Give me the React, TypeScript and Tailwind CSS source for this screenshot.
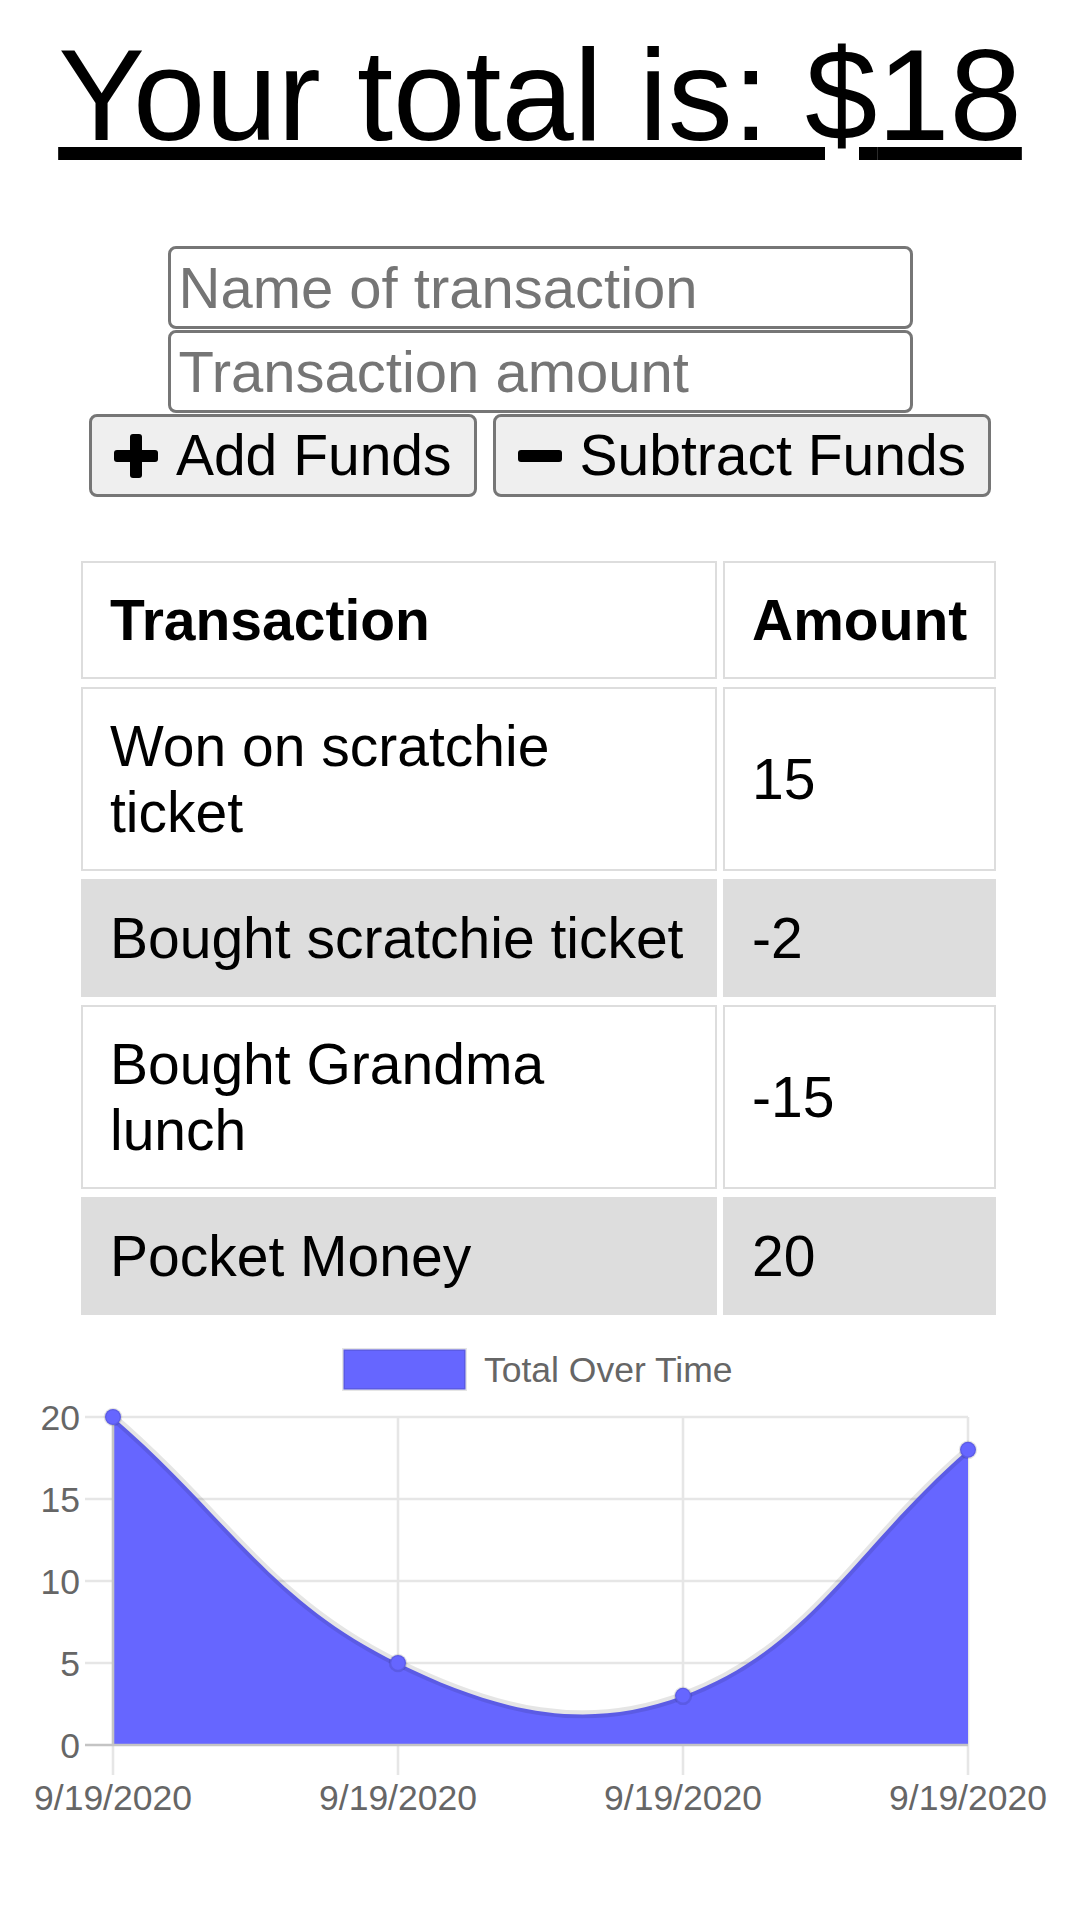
import { useState } from 'react'

type Tx = { name: string; amount: number }

const transactions: Tx[] = [
  { name: 'Won on scratchie ticket', amount: 15 },
  { name: 'Bought scratchie ticket', amount: -2 },
  { name: 'Bought Grandma lunch', amount: -15 },
  { name: 'Pocket Money', amount: 20 },
]

function PlusIcon() {
  return (
    <svg width="44" height="44" viewBox="0 0 44 44" className="shrink-0">
      <rect x="16" y="0" width="12" height="44" rx="3" fill="black" />
      <rect x="0" y="16" width="44" height="12" rx="3" fill="black" />
    </svg>
  )
}

function MinusIcon() {
  return (
    <svg width="44" height="44" viewBox="0 0 44 44" className="shrink-0">
      <rect x="0" y="16" width="44" height="12" rx="3" fill="black" />
    </svg>
  )
}

const xs = [113, 398, 683, 968]
const yTicks = [
  { v: 20, y: 1419 },
  { v: 15, y: 1501 },
  { v: 10, y: 1583 },
  { v: 5, y: 1665 },
  { v: 0, y: 1747 },
]
const points = [
  [113, 1419],
  [398, 1665],
  [683, 1697.8],
  [968, 1451.8],
]
const curve =
  'M113 1419 C227 1517.4, 268.6 1601.7, 398 1665 C496.6 1713.2, 584.4 1734.7, 683 1697.8 C812.4 1649.4, 854 1550.2, 968 1451.8'

function Chart() {
  const font = { fontFamily: 'Liberation Sans, Arial, sans-serif' }
  return (
    <svg width="1080" height="520" viewBox="0 1325 1080 520" className="block" style={font}>
      <rect x="343.5" y="1351.5" width="122" height="40" fill="#6666ff" stroke="rgba(0,0,0,0.1)" strokeWidth="3" />
      <text x="484" y="1384" fontSize="35.5" fill="#666666">Total Over Time</text>

      {yTicks.slice(0, 4).map((t) => (
        <line key={t.v} x1="85" x2="968" y1={t.y} y2={t.y} stroke="#e6e6e6" strokeWidth="2.6" />
      ))}
      {xs.slice(1).map((x) => (
        <line key={x} x1={x} x2={x} y1="1419" y2="1777" stroke="#e6e6e6" strokeWidth="2.6" />
      ))}
      <line x1="113" x2="113" y1="1747" y2="1777" stroke="#e6e6e6" strokeWidth="2.6" />

      <path d={`${curve} L968 1747 L113 1747 Z`} fill="#6666ff" />
      <line x1="85" x2="968" y1="1747" y2="1747" stroke="#c4c4c4" strokeWidth="2.6" />
      <line x1="113" x2="113" y1="1419" y2="1747" stroke="#c4c4c4" strokeWidth="2.6" />
      <path d={curve} fill="none" stroke="rgba(0,0,0,0.1)" strokeWidth="8" />
      {points.map(([x, y]) => (
        <circle key={x} cx={x} cy={y} r="8" fill="#6666ff" stroke="rgba(0,0,0,0.1)" strokeWidth="2.6" />
      ))}

      {yTicks.map((t) => (
        <text key={t.v} x="80" y={t.y + 12.5} fontSize="35.5" fill="#666666" textAnchor="end">
          {t.v}
        </text>
      ))}
      {xs.map((x) => (
        <text key={x} x={x} y="1812" fontSize="35.5" fill="#666666" textAnchor="middle">
          9/19/2020
        </text>
      ))}
    </svg>
  )
}

export default function App() {
  const [name, setName] = useState('')
  const [amount, setAmount] = useState('')

  const total = transactions.reduce((sum, t) => sum + t.amount, 0)

  return (
    <div className="flex w-[1080px] flex-col items-center bg-white font-['Liberation_Sans',Arial,sans-serif] text-black">
      <h1 className="mt-[21px] text-[130px] font-normal leading-[149px] underline">
        Your total is: ${total}
      </h1>

      <div className="mt-[76px] flex flex-col gap-[1px]">
        <input
          value={name}
          onChange={(e) => setName(e.target.value)}
          placeholder="Name of transaction"
          className="h-[83px] w-[745px] rounded-[8px] border-[3px] border-[#767676] bg-white px-[8px] text-[58px] outline-none placeholder:text-[#757575]"
        />
        <input
          value={amount}
          onChange={(e) => setAmount(e.target.value)}
          placeholder="Transaction amount"
          className="h-[83px] w-[745px] rounded-[8px] border-[3px] border-[#767676] bg-white px-[8px] text-[58px] outline-none placeholder:text-[#757575]"
        />
      </div>

      <div className="mt-[1px] flex gap-[16px]">
        <button className="flex h-[83px] items-center gap-[18px] rounded-[8px] border-[3px] border-[#767676] bg-[#efefef] px-[22px] text-[57px]">
          <PlusIcon />
          Add Funds
        </button>
        <button className="flex h-[83px] items-center gap-[18px] rounded-[8px] border-[3px] border-[#767676] bg-[#efefef] px-[22px] text-[57px]">
          <MinusIcon />
          Subtract Funds
        </button>
      </div>

      <table className="mt-[56px] ml-[75px] w-[927px] self-start table-fixed border-separate border-spacing-x-[6px] border-spacing-y-[8px] text-[57px] leading-[66px]">
        <colgroup>
          <col className="w-[636px]" />
          <col className="w-[273px]" />
        </colgroup>
        <thead>
          <tr>
            <th className="border-2 border-[#dddddd] px-[27px] py-[24px] text-left font-bold">Transaction</th>
            <th className="border-2 border-[#dddddd] px-[27px] py-[24px] text-left font-bold">Amount</th>
          </tr>
        </thead>
        <tbody>
          {transactions.map((t, i) => (
            <tr key={t.name} className={i % 2 === 1 ? 'bg-[#dddddd]' : ''}>
              <td className="border-2 border-[#dddddd] px-[27px] py-[24px]">{t.name}</td>
              <td className="border-2 border-[#dddddd] px-[27px] py-[24px]">{t.amount}</td>
            </tr>
          ))}
        </tbody>
      </table>

      <Chart />
    </div>
  )
}
